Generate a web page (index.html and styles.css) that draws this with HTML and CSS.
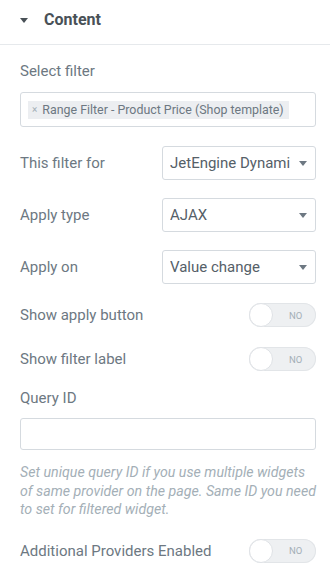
FILE: index.html
```html
<!DOCTYPE html>
<html>
<head>
<meta charset="utf-8">
<link rel="stylesheet" href="styles.css">
</head>
<body>
<div class="panel">
  <div class="header">
    <span class="caret"></span>
    <span class="title">Content</span>
  </div>
  <div class="body">
    <div class="label top-label">Select filter</div>
    <div class="multi">
      <span class="tag"><span class="tag-x">×</span>Range Filter - Product Price (Shop template)</span>
    </div>

    <div class="row first">
      <div class="label">This filter for</div>
      <div class="select"><span class="val">JetEngine Dynami</span><span class="arrow"></span></div>
    </div>
    <div class="row">
      <div class="label">Apply type</div>
      <div class="select"><span class="val">AJAX</span><span class="arrow"></span></div>
    </div>
    <div class="row">
      <div class="label">Apply on</div>
      <div class="select"><span class="val">Value change</span><span class="arrow"></span></div>
    </div>

    <div class="trow t1">
      <div class="label">Show apply button</div>
      <div class="switch"><span class="knob"></span><span class="no">NO</span></div>
    </div>
    <div class="trow t2">
      <div class="label">Show filter label</div>
      <div class="switch"><span class="knob"></span><span class="no">NO</span></div>
    </div>

    <div class="label qlabel">Query ID</div>
    <div class="input"></div>
    <p class="help">Set unique query ID if you use multiple widgets of same provider on the page. Same ID you need to set for filtered widget.</p>

    <div class="trow t3">
      <div class="label">Additional Providers Enabled</div>
      <div class="switch"><span class="knob"></span><span class="no">NO</span></div>
    </div>
  </div>
</div>
</body>
</html>
```

FILE: styles.css
```css
html, body {
  margin: 0;
  padding: 0;
  background: #ffffff;
}
body {
  font-family: Roboto, "Liberation Sans", sans-serif;
  width: 330px;
  height: 580px;
  overflow: hidden;
}
.panel {
  width: 330px;
}
.header {
  border-bottom: 1px solid #e6e9ec;
  display: flex;
  align-items: center;
  padding-left: 20px;
  padding-bottom: 5px;
  box-sizing: border-box;
  height: 45px;
}
.caret {
  width: 0;
  height: 0;
  border-left: 4.5px solid transparent;
  border-right: 4.5px solid transparent;
  border-top: 5px solid #495157;
  margin-right: 16px;
  margin-top: 2px;
}
.title {
  font-weight: 700;
  font-size: 16px;
  color: #495157;
}
.body {
  padding: 0 14px 0 20px;
}
.label {
  font-size: 15px;
  color: #6d7882;
  line-height: 20px;
  white-space: nowrap;
}
.top-label {
  margin-top: 16px;
}
.multi {
  margin-top: 11px;
  height: 35px;
  border: 1px solid #d5dadf;
  border-radius: 3px;
  box-sizing: border-box;
  display: flex;
  align-items: center;
  padding-left: 7px;
}
.tag {
  display: inline-flex;
  align-items: center;
  height: 18px;
  background: #eceef1;
  font-size: 12.4px;
  color: #6d7882;
  padding: 0 5px 0 4px;
  white-space: nowrap;
}
.tag-x {
  font-size: 10px;
  color: #a4afb7;
  margin-right: 5px;
}
.row {
  display: flex;
  align-items: center;
  justify-content: space-between;
  height: 34px;
  margin-top: 18px;
}
.row.first {
  margin-top: 19px;
}
.select {
  width: 154px;
  height: 34px;
  box-sizing: border-box;
  border: 1px solid #d5dadf;
  border-radius: 3px;
  display: flex;
  align-items: center;
  padding-left: 7px;
  padding-right: 8px;
}
.val {
  font-size: 15px;
  color: #556068;
  white-space: nowrap;
  overflow: hidden;
  flex: 1;
  margin-right: 6px;
}
.arrow {
  flex: none;
  width: 0;
  height: 0;
  border-left: 4.5px solid transparent;
  border-right: 4.5px solid transparent;
  border-top: 5px solid #6d7882;
}
.trow {
  display: flex;
  align-items: center;
  justify-content: space-between;
  height: 24px;
}
.t1 { margin-top: 19px; }
.t2 { margin-top: 20px; }
.t3 { margin-top: 20px; }
.switch {
  width: 67px;
  height: 24px;
  box-sizing: border-box;
  border-radius: 12px;
  background: #eef0f2;
  box-shadow: inset 0 0 0 1px #e2e5e8;
  position: relative;
  display: flex;
  align-items: center;
}
.knob {
  position: absolute;
  left: 0;
  top: 0;
  width: 24px;
  height: 24px;
  box-sizing: border-box;
  border-radius: 50%;
  background: #ffffff;
  border: 1px solid #dfe2e6;
}
.no {
  margin-left: 40px;
  font-size: 9.5px;
  color: #a4afb7;
}
.qlabel {
  margin-top: 17px;
}
.input {
  margin-top: 10px;
  height: 32px;
  border: 1px solid #d5dadf;
  border-radius: 3px;
  box-sizing: border-box;
}
.help {
  margin: 13px 0 0 0;
  font-size: 14.2px;
  font-style: italic;
  line-height: 18.5px;
  color: #a4afb7;
}
```
